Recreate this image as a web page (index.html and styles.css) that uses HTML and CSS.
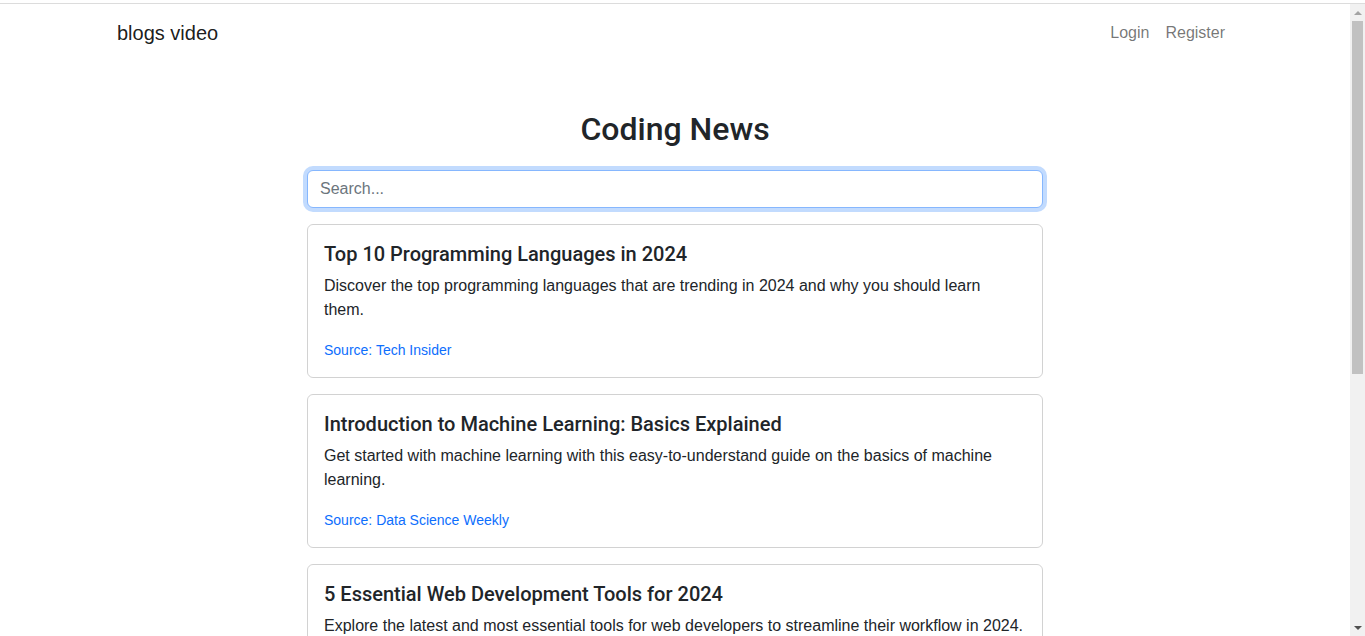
FILE: index.html
```html
<!DOCTYPE html>
<html lang="en">
<head>
<meta charset="utf-8">
<title>blogs video</title>
<link rel="stylesheet" href="styles.css">
</head>
<body>
<div class="top-edge"></div>
<div class="window">
  <div class="page">
    <nav class="navbar">
      <div class="container nav-inner">
        <a class="brand" href="#">blogs video</a>
        <ul class="nav-links">
          <li><a class="nav-link" href="#">Login</a></li>
          <li><a class="nav-link" href="#">Register</a></li>
        </ul>
      </div>
    </nav>
    <main class="container main">
      <div class="column">
        <h2 class="page-title">Coding News</h2>
        <input class="search" type="text" placeholder="Search...">
        <div class="card">
          <div class="card-body">
            <h5 class="card-title">Top 10 Programming Languages in 2024</h5>
            <p class="card-text">Discover the top programming languages that are trending in 2024 and why you should learn them.</p>
            <p class="card-source"><small><a href="#">Source: Tech Insider</a></small></p>
          </div>
        </div>
        <div class="card">
          <div class="card-body">
            <h5 class="card-title">Introduction to Machine Learning: Basics Explained</h5>
            <p class="card-text">Get started with machine learning with this easy-to-understand guide on the basics of machine learning.</p>
            <p class="card-source"><small><a href="#">Source: Data Science Weekly</a></small></p>
          </div>
        </div>
        <div class="card">
          <div class="card-body">
            <h5 class="card-title">5 Essential Web Development Tools for 2024</h5>
            <p class="card-text">Explore the latest and most essential tools for web developers to streamline their workflow in 2024.</p>
            <p class="card-source"><small><a href="#">Source: Web Dev Digest</a></small></p>
          </div>
        </div>
      </div>
    </main>
  </div>
  <div class="scrollbar" aria-hidden="true">
    <div class="sb-btn"><span class="arrow-up"></span></div>
    <div class="sb-track">
      <div class="sb-thumb"></div>
    </div>
    <div class="sb-btn"><span class="arrow-down"></span></div>
  </div>
</div>
</body>
</html>
```
FILE: styles.css
```css
* { box-sizing: border-box; }

html, body {
  margin: 0;
  height: 636px;
  overflow: hidden;
  background: #fff;
}

body {
  font-family: "Liberation Sans", Roboto, sans-serif;
  font-size: 16px;
  line-height: 1.5;
  color: #212529;
}

a { text-decoration: none; }

.top-edge {
  height: 4px;
  border-bottom: 1px solid #dcdcdc;
  background: #fff;
}

.window {
  display: flex;
  height: 632px;
}

.page {
  flex: 1;
  min-width: 0;
  overflow: hidden;
}

/* fake browser scrollbar */
.scrollbar {
  width: 15px;
  flex: none;
  background: #f1f1f1;
  display: flex;
  flex-direction: column;
}
.sb-btn {
  height: 17px;
  display: flex;
  align-items: center;
  justify-content: center;
}
.arrow-up, .arrow-down {
  width: 0;
  height: 0;
  border-left: 4px solid transparent;
  border-right: 4px solid transparent;
}
.arrow-up { border-bottom: 4px solid #a3a3a3; }
.arrow-down { border-top: 4px solid #505050; }
.sb-track {
  flex: 1;
  padding: 0 2px;
}
.sb-thumb {
  height: 353px;
  background: #c1c1c1;
}

.container {
  width: 1140px;
  margin: 0 auto;
  padding: 0 12px;
}

/* navbar */
.navbar {
  padding: 8px 0;
}
.nav-inner {
  display: flex;
  align-items: center;
  justify-content: space-between;
}
.brand {
  font-size: 20px;
  line-height: 30px;
  padding: 6px 0 4px;
  color: rgba(0, 0, 0, 0.9);
}
.nav-links {
  display: flex;
  list-style: none;
  margin: 0;
  padding: 0;
}
.nav-link {
  display: block;
  padding: 9px 8px 7px;
  color: rgba(0, 0, 0, 0.55);
}

/* main column */
.main {
  margin-top: 48px;
  display: flex;
  justify-content: center;
}
.column {
  width: 760px;
  padding: 0 12px;
  flex: none;
}

.page-title {
  margin: 0 0 22px;
  padding-top: 2px;
  text-align: center;
  font-family: Roboto, "Liberation Sans", sans-serif;
  font-size: 32px;
  font-weight: 500;
  line-height: 1.2;
}

.search {
  display: block;
  width: 100%;
  margin-bottom: 16px;
  padding: 6px 12px;
  font-family: "Liberation Sans", Roboto, sans-serif;
  font-size: 16px;
  line-height: 1.5;
  color: #212529;
  border: 1px solid #86b7fe;
  border-radius: 6px;
  box-shadow: 0 0 0 4px rgba(13, 110, 253, 0.25);
  outline: none;
}
.search::placeholder { color: #6c757d; }

.card {
  border: 1px solid rgba(0, 0, 0, 0.175);
  border-radius: 6px;
  margin-bottom: 16px;
}
.card-body {
  padding: 17px 16px 15px;
}
.card-title {
  margin: 0 0 8px;
  font-family: Roboto, "Liberation Sans", sans-serif;
  font-size: 20px;
  font-weight: 500;
  line-height: 1.2;
}
.card-text {
  max-width: 700px;
  margin: 0 0 16px;
}
.card-source {
  margin: 0;
}
.card-source small { font-size: 14px; }
.card-source a { color: #0d6efd; }
```
